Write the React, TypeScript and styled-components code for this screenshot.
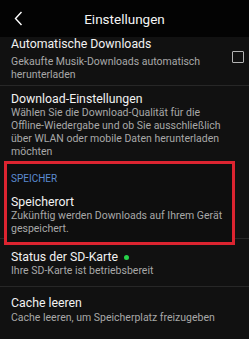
import styled, { createGlobalStyle } from 'styled-components';

const GlobalStyle = createGlobalStyle`
  html, body {
    margin: 0;
    padding: 0;
    background: #111111;
  }
  body {
    font-family: Roboto, 'Noto Sans', sans-serif;
    -webkit-font-smoothing: antialiased;
  }
`;

const Screen = styled.div`
  width: 249px;
  height: 339px;
  overflow: hidden;
  background: #111111;
  color: #f2f2f2;
`;

const Header = styled.header`
  height: 37px;
  background: #030303;
  display: flex;
  align-items: center;
`;

const BackButton = styled.button`
  width: 36px;
  height: 37px;
  display: flex;
  align-items: center;
  justify-content: center;
  background: none;
  border: none;
  padding: 0;
`;

const Title = styled.h1`
  flex: 1;
  margin: 0 36px 0 0;
  text-align: center;
  font-size: 13.5px;
  font-weight: 400;
  color: #f4f4f4;
`;

const Item = styled.div<{ $top: number; $bottom: number; $line?: boolean }>`
  display: flex;
  align-items: center;
  padding: ${(p) => p.$top}px 5px ${(p) => p.$bottom}px 11px;
  border-bottom: ${(p) => (p.$line ? '1px solid #272727' : 'none')};
`;

const ItemText = styled.div`
  flex: 1;
`;

const ItemTitle = styled.div`
  font-size: 12.3px;
  line-height: 14px;
  color: #f2f2f2;
  display: flex;
  align-items: center;
  gap: 6px;
  white-space: nowrap;
`;

const ItemSub = styled.div<{ $gap?: number }>`
  margin-top: ${(p) => p.$gap ?? 0}px;
  font-size: 10.5px;
  line-height: 13px;
  color: #a8a8a8;
  white-space: nowrap;
`;

const Checkbox = styled.span`
  flex: none;
  width: 10px;
  height: 10px;
  border: 1.5px solid #b4b4b4;
  border-radius: 1px;
  margin-bottom: 4px;
`;

const HighlightRow = styled.div`
  position: relative;
  &::after {
    content: '';
    position: absolute;
    left: 0;
    right: 0;
    bottom: 6px;
    height: 1px;
    background: #272727;
  }
`;

const Highlight = styled.section`
  position: relative;
  z-index: 1;
  margin: 0 14px 0 4px;
  border: 3px solid #dc2430;
  padding: 9px 4px 7px;
  background: #0e0e0e;
`;

const SectionLabel = styled.div`
  font-size: 10px;
  line-height: 12px;
  color: #5b8bd2;
  margin-bottom: 10px;
`;

const GreenDot = styled.span`
  width: 5px;
  height: 5px;
  border-radius: 50%;
  background: #27d24a;
`;

export default function App() {
  return (
    <Screen>
      <GlobalStyle />
      <Header>
        <BackButton aria-label="Zurück">
          <svg width="9" height="15" viewBox="0 0 9 15">
            <path d="M7.5 1 L1.5 7.5 L7.5 14" fill="none" stroke="#fff" strokeWidth="1.4" />
          </svg>
        </BackButton>
        <Title>Einstellungen</Title>
      </Header>
      <Item $top={0} $bottom={4} $line>
        <ItemText>
          <ItemTitle>Automatische Downloads</ItemTitle>
          <ItemSub $gap={4}>
            Gekaufte Musik-Downloads automatisch
            <br />
            herunterladen
          </ItemSub>
        </ItemText>
        <Checkbox />
      </Item>
      <Item $top={6} $bottom={3}>
        <ItemText>
          <ItemTitle>Download-Einstellungen</ItemTitle>
          <ItemSub>
            Wählen Sie die Download-Qualität für die
            <br />
            Offline-Wiedergabe und ob Sie ausschließlich
            <br />
            über WLAN oder mobile Daten herunterladen
            <br />
            möchten
          </ItemSub>
        </ItemText>
      </Item>
      <HighlightRow>
        <Highlight>
          <SectionLabel>SPEICHER</SectionLabel>
          <ItemTitle>Speicherort</ItemTitle>
          <ItemSub>
            Zukünftig werden Downloads auf Ihrem Gerät
            <br />
            gespeichert.
          </ItemSub>
        </Highlight>
      </HighlightRow>
      <Item $top={5} $bottom={9} $line>
        <ItemText>
          <ItemTitle>
            Status der SD-Karte <GreenDot />
          </ItemTitle>
          <ItemSub>Ihre SD-Karte ist betriebsbereit</ItemSub>
        </ItemText>
      </Item>
      <Item $top={9} $bottom={8}>
        <ItemText>
          <ItemTitle>Cache leeren</ItemTitle>
          <ItemSub $gap={1}>Cache leeren, um Speicherplatz freizugeben</ItemSub>
        </ItemText>
      </Item>
    </Screen>
  );
}
